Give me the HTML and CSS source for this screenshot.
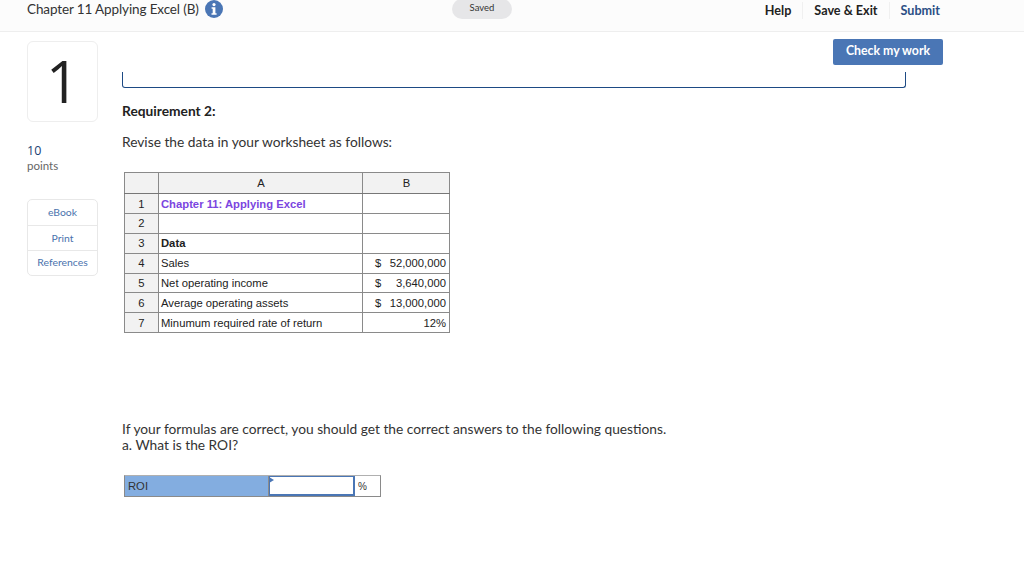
FILE: index.html
```html
<!DOCTYPE html>
<html lang="en">
<head>
<meta charset="utf-8">
<title>Chapter 11 Applying Excel (B)</title>
<link rel="stylesheet" href="styles.css">
</head>
<body>
<header class="topbar">
  <div class="title-wrap">
    <span class="title">Chapter 11 Applying Excel (B)</span>
    <svg class="info" viewBox="0 0 18 18" width="18" height="18" aria-hidden="true">
      <circle cx="9" cy="9" r="9" fill="#4a76b5"/>
      <circle cx="9" cy="4.6" r="1.6" fill="#fff"/>
      <path d="M6.6 7.3h3.8v5.9h1.2v1.5H6.5v-1.5h1.2V8.8H6.6z" fill="#fff"/>
    </svg>
  </div>
  <div class="saved">Saved</div>
  <nav class="actions">
    <span class="action">Help</span>
    <span class="action">Save &amp; Exit</span>
    <span class="action submit">Submit</span>
  </nav>
</header>
<div class="page">
  <aside class="side">
    <div class="qnum">1</div>
    <div class="points"><div class="pts-num">10</div><div class="pts-label">points</div></div>
    <div class="tools">
      <div class="tool tool-a">eBook</div>
      <div class="tool tool-b">Print</div>
      <div class="tool tool-c">References</div>
    </div>
  </aside>
  <main class="content">
    <button class="check">Check my work</button>
    <div class="bracket"></div>
    <h2 class="req">Requirement 2:</h2>
    <p class="lead">Revise the data in your worksheet as follows:</p>
    <table class="sheet">
      <tr class="head"><th class="rowh"></th><th class="cola">A</th><th class="colb">B</th></tr>
      <tr class="low"><td class="rowh">1</td><td class="purple">Chapter 11: Applying Excel</td><td></td></tr>
      <tr><td class="rowh">2</td><td></td><td></td></tr>
      <tr><td class="rowh">3</td><td class="bold">Data</td><td></td></tr>
      <tr><td class="rowh">4</td><td>Sales</td><td class="num"><span class="cur">$</span>52,000,000</td></tr>
      <tr class="low short"><td class="rowh">5</td><td>Net operating income</td><td class="num"><span class="cur">$</span>3,640,000</td></tr>
      <tr class="low"><td class="rowh">6</td><td>Average operating assets</td><td class="num"><span class="cur">$</span>13,000,000</td></tr>
      <tr class="low"><td class="rowh">7</td><td>Minumum required rate of return</td><td class="num">12%</td></tr>
    </table>
    <p class="question">If your formulas are correct, you should get the correct answers to the following questions.<br>a. What is the ROI?</p>
    <div class="roi">
      <div class="roi-label">ROI</div>
      <div class="roi-input"></div>
      <div class="roi-unit">%</div>
    </div>
  </main>
</div>
</body>
</html>
```
FILE: styles.css
```css
* { box-sizing: border-box; }
html, body { margin: 0; padding: 0; }
body {
  width: 1024px;
  height: 572px;
  overflow: hidden;
  background: #fff;
  color: #222;
  font-family: "Lato", "Open Sans", sans-serif;
}
.topbar {
  display: flex;
  align-items: flex-start;
  height: 32px;
  background: #fcfcfc;
  border-bottom: 1px solid #eee;
  position: relative;
}
.title-wrap {
  display: flex;
  align-items: center;
  gap: 6px;
  margin-left: 27px;
  height: 18px;
}
.title { font-size: 13.5px; letter-spacing: -0.12px; color: #333; }
.info { display: block; }
.saved {
  position: absolute;
  left: 452px;
  top: -1px;
  width: 60px;
  height: 20px;
  border-radius: 10px;
  background: #e6e6e8;
  font-size: 9.5px;
  line-height: 18px;
  text-align: center;
  color: #333;
}
.actions {
  display: flex;
  margin-left: auto;
  margin-right: 73px;
  margin-top: 2px;
  height: 17px;
}
.action {
  font-size: 12.6px;
  font-weight: 700;
  line-height: 17px;
  padding: 0 11px;
  border-left: 1px solid #f0f0f0;
  color: #222;
}
.action:first-child { border-left: 0; }
.submit { color: #2b4f85; }
.page { display: flex; }
.side {
  width: 122px;
  flex: none;
  padding: 9px 0 0 27px;
}
.qnum {
  width: 71px;
  height: 81px;
  border: 1px solid #eee;
  border-radius: 6px;
  font-family: "Open Sans", sans-serif;
  font-size: 58px;
  line-height: 78px;
  text-align: center;
  color: #222;
}
.points { margin-top: 22px; }
.pts-num { font-family: "Open Sans", sans-serif; font-size: 12.5px; line-height: 14px; color: #1d3f72; }
.pts-label { font-size: 11.5px; line-height: 15px; color: #666; }
.tools {
  width: 71px;
  margin-top: 26px;
  border: 1px solid #e8e8e8;
  border-radius: 5px;
  font-size: 10.4px;
  color: #4a72ad;
  text-align: center;
}
.tool { border-top: 1px solid #e8e8e8; }
.tool-a { border-top: 0; height: 25px; line-height: 25px; }
.tool-b { height: 25px; line-height: 24px; }
.tool-c { height: 25px; line-height: 22px; }
.content { position: relative; flex: 1; }
.check {
  position: absolute;
  left: 711px;
  top: 7px;
  width: 110px;
  height: 26px;
  border: 0;
  border-radius: 2px;
  background: #4a76b5;
  color: #fff;
  font-family: inherit;
  font-size: 12.3px;
  font-weight: 700;
  padding: 0 0 3px;
}
.bracket {
  margin-top: 40px;
  width: 784px;
  height: 16px;
  border: 1px solid #1d4a84;
  border-top: 0;
  border-radius: 0 0 3px 3px;
}
.req {
  margin: 15px 0 0;
  font-size: 13.75px;
  line-height: 16px;
  font-weight: 700;
  color: #222;
}
.lead {
  margin: 15px 0 0;
  font-size: 13.75px;
  line-height: 16px;
  color: #333;
}
.sheet {
  margin: 22px 0 0 2px;
  border-collapse: collapse;
  table-layout: fixed;
  width: 326px;
  font-family: "Liberation Sans", Arial, sans-serif;
  font-size: 11.25px;
  color: #222;
}
.sheet th, .sheet td {
  border: 1px solid #8a8a8a;
  height: 20px;
  padding: 0 3px 1px 2px;
  font-weight: 400;
  white-space: nowrap;
}
.sheet .head th { height: 21px; background: #f2f2f2; text-align: center; border-bottom-color: #777; }
.sheet .rowh { width: 34px; background: #f2f2f2; text-align: center; padding: 0 0 1px; }
.sheet .cola { width: 204px; padding-left: 4px; }
.sheet .colb { padding-left: 4px; }
.sheet .low td { padding-bottom: 0; }
.sheet .short td { height: 19px; }
.sheet .purple { color: #7b45e0; font-weight: 700; }
.sheet .bold { font-weight: 700; }
.sheet .num { text-align: right; }
.cur { float: left; margin-left: 10px; }
.question {
  margin: 88px 0 0;
  font-size: 13.75px;
  line-height: 16px;
  color: #333;
}
.roi {
  display: flex;
  margin: 22px 0 0 2px;
  width: 257px;
  height: 22px;
  font-family: "Liberation Sans", Arial, sans-serif;
  font-size: 11.25px;
  border: 1px solid #8a8a8a;
  border-top-color: #b0b0b0;
}
.roi-label {
  width: 144px;
  background: #83ade0;
  padding-left: 3px;
  line-height: 20px;
  color: #333;
  border-right: 1px solid #8a8a8a;
}
.roi-input {
  width: 86px;
  border: 2px solid #4a76b5;
  border-top-width: 1px;
  border-left-width: 1px;
  position: relative;
}
.roi-input::before {
  content: "";
  position: absolute;
  left: -1px;
  top: 0;
  border-top: 3px solid transparent;
  border-bottom: 3px solid transparent;
  border-left: 5px solid #4a76b5;
}
.roi-unit { flex: 1; padding-left: 3px; line-height: 21px; font-size: 10px; color: #333; }
```
